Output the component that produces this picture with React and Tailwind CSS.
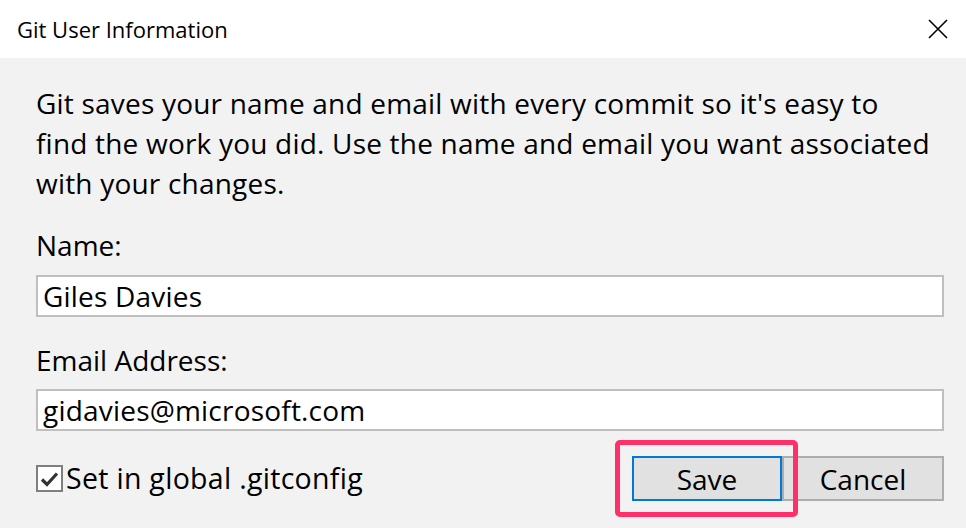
import React from "react";

function CloseIcon() {
    return (
        <svg width="20" height="20" viewBox="0 0 20 20" className="block">
            <path d="M1 1 L19 19 M19 1 L1 19" stroke="#000" strokeWidth="1.6" fill="none" />
        </svg>
    );
}

function TextField({ value }) {
    return (
        <div className="h-[42px] w-full border-2 border-[#bfbfbf] bg-white flex items-center pl-[5px]">
            <span className="text-[28px] leading-none tracking-[0.2px] text-black">{value}</span>
        </div>
    );
}

export default function App() {
    return (
        <div
            className="w-[966px] h-[528px] bg-[#f2f2f2] overflow-hidden text-black"
            style={{ fontFamily: '"Open Sans", "Noto Sans", "Liberation Sans", sans-serif' }}
        >
            {/* title bar */}
            <div className="h-[58px] bg-white flex items-center justify-between pl-[17px] pr-[18px]">
                <span className="text-[22px] leading-none">Git User Information</span>
                <CloseIcon />
            </div>

            <div className="pl-[36px] pr-[22px] pt-[25px]">
                <p className="text-[28px] leading-[40px] tracking-[0.2px] whitespace-nowrap">
                    Git saves your name and email with every commit so it's easy to
                    <br />
                    find the work you did. Use the name and email you want associated
                    <br />
                    with your changes.
                </p>

                <div className="mt-[22px] text-[28px] leading-[40px]">Name:</div>
                <div className="mt-[10px]">
                    <TextField value="Giles Davies" />
                </div>

                <div className="mt-[23px] text-[28px] leading-[40px]">Email Address:</div>
                <div className="mt-[9px]">
                    <TextField value="gidavies@microsoft.com" />
                </div>

                {/* footer */}
                <div className="mt-[25px] flex items-center justify-between">
                    <label className="flex items-center gap-[3px]">
                        <span className="w-[27px] h-[27px] border-2 border-[#7f7f7f] bg-white flex items-center justify-center">
                            <svg width="19" height="16" viewBox="0 0 19 16">
                                <path d="M2 8.5 L7 13.5 L17 2.5" stroke="#333" strokeWidth="3.2" fill="none" />
                            </svg>
                        </span>
                        <span className="text-[28.5px] leading-none tracking-[0.3px]">Set in global .gitconfig</span>
                    </label>

                    <div className="flex">
                        <div className="relative">
                            <button className="w-[150px] h-[45px] border-2 border-[#0078d7] bg-[#e1e1e1] text-[28px] leading-none">
                                Save
                            </button>
                            {/* highlight annotation */}
                            <span className="absolute left-[-17px] top-[-16px] w-[183px] h-[77px] border-[5px] border-[#ff2f6a] rounded-[5px] pointer-events-none" />
                        </div>
                        <button className="w-[162px] h-[45px] border-2 border-[#adadad] bg-[#e1e1e1] text-[28px] leading-none">
                            Cancel
                        </button>
                    </div>
                </div>
            </div>
        </div>
    );
}
